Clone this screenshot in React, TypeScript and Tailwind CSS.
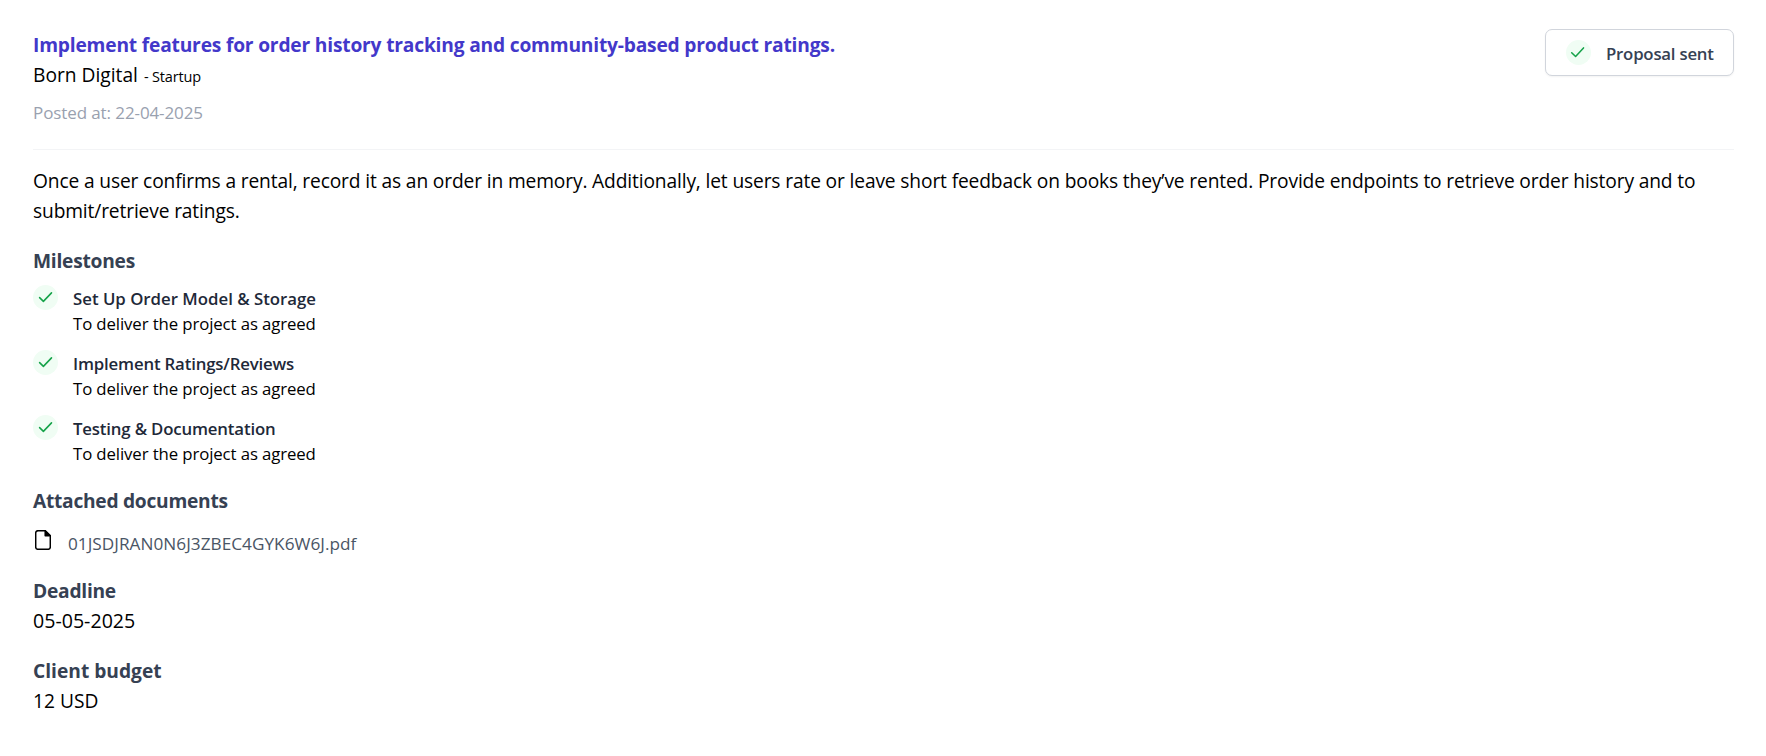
type Milestone = { title: string; note: string; tracking: string };

const milestones: Milestone[] = [
  { title: "Set Up Order Model & Storage", note: "To deliver the project as agreed", tracking: "tracking-normal" },
  { title: "Implement Ratings/Reviews", note: "To deliver the project as agreed", tracking: "tracking-[-0.17px]" },
  { title: "Testing & Documentation", note: "To deliver the project as agreed", tracking: "tracking-[-0.16px]" },
];

function CheckBadge({ path }: { path: string }) {
  return (
    <span className="size-[25px] shrink-0 rounded-full bg-[#f0fdf4]">
      <svg viewBox="0 0 25 25" className="size-[25px]" fill="none" stroke="#16a34a" strokeWidth="1.55" strokeLinecap="round" strokeLinejoin="round">
        <path d={path} />
      </svg>
    </span>
  );
}

function DocumentIcon() {
  return (
    <svg viewBox="0 0 16 20" className="h-5 w-4 shrink-0" fill="none" stroke="#000" strokeWidth="1.5" strokeLinejoin="round">
      <path d="M3 .7h7.2L15.3 5.8V17a2.3 2.3 0 0 1-2.3 2.3H3A2.3 2.3 0 0 1 .7 17V3A2.3 2.3 0 0 1 3 .7Z" />
      <path d="M10.2 .7v5.1h5.1Z" fill="#000" />
    </svg>
  );
}

export default function App() {
  return (
    <main className="h-[756px] bg-white px-[33px] pt-[29px] pr-8 font-['Open_Sans','Liberation_Sans',sans-serif] text-[19.2px] leading-[30px] text-black">
      <header className="flex h-[121px] items-start justify-between border-b border-gray-100">
        <div className="pt-px">
          <h1 className="font-bold tracking-[-0.188px] text-[#4338ca]">
            Implement features for order history tracking and community-based product ratings.
          </h1>
          <p className="flex items-baseline gap-[6px]">
            <span>Born Digital</span>
            <span className="text-[14.5px] tracking-[-0.15px]">- Startup</span>
          </p>
          <p className="mt-2 text-[17px] leading-[25px] tracking-[-0.1px] text-gray-400">Posted at: 22-04-2025</p>
        </div>
        <button className="flex h-[47px] w-[189px] items-start rounded-[7px] border border-gray-300 bg-white pt-2.5 pl-5 shadow-xs">
          <CheckBadge path="M5.7 12.7 9.6 16.5 17.5 7.9" />
          <span className="mt-px ml-[15px] text-[16.8px] leading-[25px] font-semibold tracking-[-0.22px] text-gray-700">Proposal sent</span>
        </button>
      </header>

      <p className="mt-4 w-[1690px] tracking-[-0.14px]">
        Once a user confirms a rental, record it as an order in memory. Additionally, let users rate or leave short feedback on books they’ve rented. Provide endpoints to retrieve order history and to submit/retrieve ratings.
      </p>

      <section className="mt-5">
        <h2 className="font-bold tracking-[-0.24px] text-gray-700">Milestones</h2>
        <ul className="mt-[9px] flex flex-col gap-[14px]">
          {milestones.map((m) => (
            <li key={m.title} className="flex gap-[15px]">
              <CheckBadge path="M6.6 12.6 10.4 16.4 18.5 7.9" />
              <div className="pt-px text-[16.8px] leading-[25px]">
                <h3 className={`font-semibold text-gray-800 ${m.tracking}`}>{m.title}</h3>
                <p className="tracking-[-0.11px]">{m.note}</p>
              </div>
            </li>
          ))}
        </ul>
      </section>

      <section className="mt-5">
        <h2 className="font-bold tracking-[-0.27px] text-gray-700">Attached documents</h2>
        <div className="mt-[14px] flex items-start pl-[2px]">
          <DocumentIcon />
          <a className="mt-px ml-[17px] text-[17.2px] leading-[25px] tracking-[0.03px] text-gray-600">01JSDJRAN0N6J3ZBEC4GYK6W6J.pdf</a>
        </div>
      </section>

      <section className="mt-5">
        <h2 className="font-bold tracking-[-0.25px] text-gray-700">Deadline</h2>
        <p className="text-[19.6px]">05-05-2025</p>
      </section>

      <section className="mt-5">
        <h2 className="font-bold text-gray-700">Client budget</h2>
        <p>12 USD</p>
      </section>
    </main>
  );
}
